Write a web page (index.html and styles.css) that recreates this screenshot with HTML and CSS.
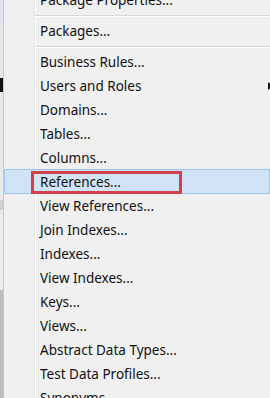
FILE: index.html
```html
<!DOCTYPE html>
<html>
<head>
<meta charset="utf-8">
<link rel="stylesheet" href="styles.css">
</head>
<body>
<div class="screen">
  <div class="edge"></div>
  <div class="menu">
    <div class="item">Package Properties...</div>
    <div class="sep"></div>
    <div class="item">Packages...</div>
    <div class="sep"></div>
    <div class="item">Business Rules...</div>
    <div class="item sub">Users and Roles</div>
    <div class="item">Domains...</div>
    <div class="item">Tables...</div>
    <div class="item">Columns...</div>
    <div class="item hot"><span class="mark">References...</span></div>
    <div class="item">View References...</div>
    <div class="item">Join Indexes...</div>
    <div class="item">Indexes...</div>
    <div class="item">View Indexes...</div>
    <div class="item">Keys...</div>
    <div class="item">Views...</div>
    <div class="item">Abstract Data Types...</div>
    <div class="item">Test Data Profiles...</div>
    <div class="item">Synonyms...</div>
  </div>
</div>
</body>
</html>
```
FILE: styles.css
```css
html, body {
  margin: 0;
  padding: 0;
  background: #f0f0f0;
  overflow: hidden;
}
.screen {
  display: flex;
  width: 270px;
  height: 398px;
  overflow: hidden;
}
.edge {
  width: 3px;
  flex: none;
  background: linear-gradient(#dfe6ee 0 30px, #e8e8e8 30px 78px, #111 78px 92px, #e9e9e9 92px 200px, #cfcfcf 200px 210px, #ececec 210px 290px, #bdbdbd 290px 398px);
  border-right: 1px solid #c8c8c8;
}
.menu {
  flex: 1;
  margin-top: -12px;
  background: #f0f0f0 linear-gradient(90deg, transparent 30px, #e2e3e3 30px 31px, #ffffff 31px 32px, transparent 32px);
  font-family: "Noto Sans", sans-serif;
  font-size: 13.5px;
  color: #111;
}
.item {
  position: relative;
  height: 24px;
  line-height: 24px;
  padding-left: 36px;
  white-space: nowrap;
}
.sep {
  height: 7px;
  background: linear-gradient(transparent 3px, #d7d7d7 3px 4px, #fff 4px 5px, transparent 5px);
  margin-left: 31px;
}
.sub::after {
  content: "";
  position: absolute;
  right: -3px;
  top: 8px;
  border-left: 5px solid #111;
  border-top: 4px solid transparent;
  border-bottom: 4px solid transparent;
}
.hot {
  background: #d1e3f6;
  box-shadow: inset 0 0 0 1px #9ec4ec;
  margin-top: -1px;
  height: 25px;
}
.mark {
  position: absolute;
  left: 27px;
  top: 2px;
  width: 139px;
  height: 17px;
  line-height: 17px;
  padding-left: 6px;
  border: 3px solid #d2404a;
}
```
